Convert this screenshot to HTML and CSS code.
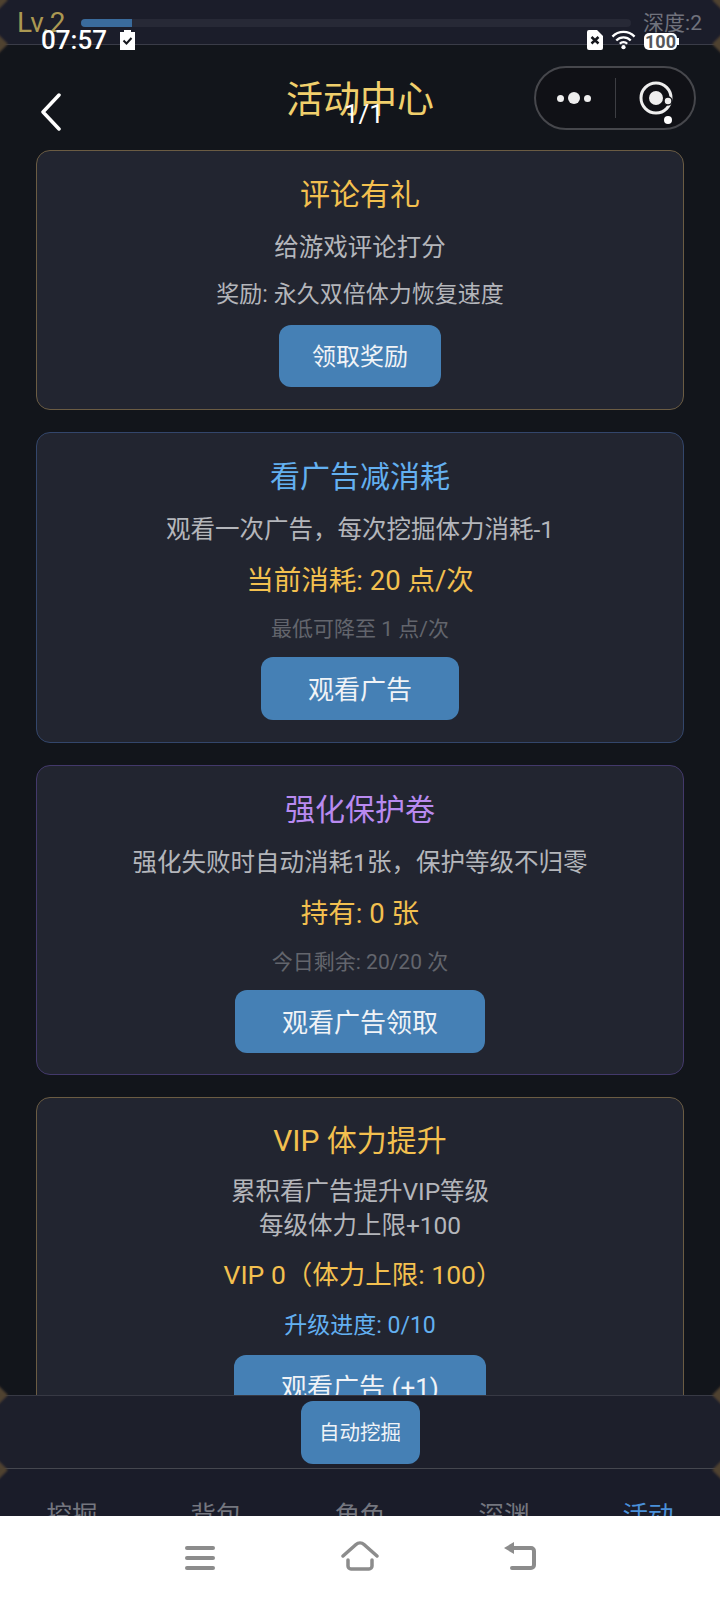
FILE: index.html
```html
<!DOCTYPE html>
<html lang="zh-CN">
<head>
    <meta charset="UTF-8">
    <meta name="viewport" content="width=device-width, initial-scale=1.0">
    <title>活动中心</title>
    <link rel="stylesheet" href="styles.css">
</head>
<body>
    <div class="app">
        <div class="top-bar">
            <span class="level">Lv.2</span>
            <div class="exp-bar"><div class="exp-fill"></div></div>
            <span class="depth">深度:2</span>
        </div>

        <div class="panel">
            <div class="panel-head">
                <h1>活动中心</h1>
            </div>
            <div class="cards">
                <div class="card card-gold">
                    <h2 class="gold">评论有礼</h2>
                    <p>给游戏评论打分</p>
                    <p class="reward">奖励: 永久双倍体力恢复速度</p>
                    <button class="btn btn-sm">领取奖励</button>
                </div>
                <div class="card card-blue">
                    <h2 class="blue">看广告减消耗</h2>
                    <p>观看一次广告，每次挖掘体力消耗-1</p>
                    <p class="stat">当前消耗: 20 点/次</p>
                    <p class="hint">最低可降至 1 点/次</p>
                    <button class="btn">观看广告</button>
                </div>
                <div class="card card-purple">
                    <h2 class="purple">强化保护卷</h2>
                    <p>强化失败时自动消耗1张，保护等级不归零</p>
                    <p class="stat">持有: 0 张</p>
                    <p class="hint">今日剩余: 20/20 次</p>
                    <button class="btn">观看广告领取</button>
                </div>
                <div class="card card-gold card-vip">
                    <h2 class="gold">VIP 体力提升</h2>
                    <p class="two-lines">累积看广告提升VIP等级<br>每级体力上限+100</p>
                    <p class="stat stat-vip">VIP 0（体力上限: 100）</p>
                    <p class="progress">升级进度: 0/10</p>
                    <button class="btn btn-wide">观看广告 (+1)</button>
                </div>
            </div>
        </div>

        <div class="action-bar">
            <button class="auto-btn">自动挖掘</button>
        </div>

        <div class="tabs">
            <span>挖掘</span>
            <span>背包</span>
            <span>角色</span>
            <span>深渊</span>
            <span class="active">活动</span>
        </div>

        <!-- things the host app paints over the page -->
        <i class="corner corner-l row-a"></i>
        <i class="corner corner-r row-a"></i>
        <i class="corner corner-l row-b"></i>
        <i class="corner corner-r row-b"></i>
        <i class="corner corner-l row-c"></i>
        <i class="corner corner-r row-c"></i>
        <i class="corner corner-l row-d"></i>
        <i class="corner corner-r row-d"></i>

        <div class="status-bar">
            <div class="status-left">
                <span class="clock">07:57</span>
                <svg width="15" height="20" viewBox="0 0 15 20"><path fill="#fff" d="M4 0h7v2h4v18H0V2h4z"/><path fill="none" stroke="#14161c" stroke-width="2" d="M3.500 10.500l3 3 5-5.500"/></svg>
            </div>
            <div class="status-right">
                <svg width="16" height="20" viewBox="0 0 16 20"><path fill="#fff" d="M2 0h8l6 6v12a2 2 0 0 1-2 2H2a2 2 0 0 1-2-2V2a2 2 0 0 1 2-2z"/><path fill="none" stroke="#14161c" stroke-width="2.500" d="M4.500 7l7 6.500m0-6.500l-7 6.500"/></svg>
                <svg width="25" height="20" viewBox="0 0 26 20"><g fill="none" stroke="#fff" stroke-width="2.400"><path d="M1.500 6.500a16 16 0 0 1 23 0"/><path d="M5.500 10.500a10.500 10.500 0 0 1 15 0"/><path d="M9.200 14a5 5 0 0 1 7.600 0"/></g><circle cx="13" cy="17.500" r="2.200" fill="#fff"/></svg>
                <span class="battery">100</span>
            </div>
        </div>

        <button class="back" aria-label="返回">
            <svg width="20" height="38" viewBox="0 0 20 38"><path fill="none" stroke="#fff" stroke-width="3.500" stroke-linecap="round" stroke-linejoin="round" d="M18 2L2 19l16 17"/></svg>
        </button>
        <span class="page-count">1/1</span>

        <div class="capsule">
            <div class="dots"><i></i><i class="big"></i><i></i></div>
            <span class="sep"></span>
            <svg width="36" height="46" viewBox="0 0 36 46"><circle cx="17" cy="18" r="15" fill="none" stroke="#eee" stroke-width="3"/><circle cx="17" cy="18" r="7" fill="#eee"/><circle cx="29" cy="21" r="4" fill="#eee" stroke="#101116" stroke-width="1.500"/><circle cx="29" cy="40" r="4" fill="#fff"/></svg>
        </div>

        <div class="sys-nav">
            <svg width="32" height="26" viewBox="0 0 32 26"><g fill="none" stroke="#8c8c8c" stroke-width="4" stroke-linecap="round"><path d="M3 3h26"/><path d="M3 13h26"/><path d="M3 23h26"/></g></svg>
            <svg class="up" width="38" height="30" viewBox="0 0 38 30"><g fill="none" stroke="#8c8c8c" stroke-width="3.500" stroke-linecap="round" stroke-linejoin="round"><path d="M2 15L15 3.500a6 6 0 0 1 8 0L36 15"/><path d="M7 19v6a3 3 0 0 0 3 3h18a3 3 0 0 0 3-3v-6"/></g></svg>
            <svg class="up" width="34" height="30" viewBox="0 0 34 30"><g fill="none" stroke="#8c8c8c" stroke-width="4" stroke-linecap="round" stroke-linejoin="round"><path d="M8 7h20a3 3 0 0 1 3 3v14a3 3 0 0 1-3 3H9"/></g><path fill="#8c8c8c" d="M11 1v12L1 7z"/></svg>
        </div>
    </div>
</body>
</html>
```

FILE: styles.css
```css
* {
    box-sizing: border-box;
}
html, body {
    margin: 0;
    height: 100%;
}
body {
    font-family: "Roboto", "Noto Sans CJK SC", sans-serif;
    background-color: #fff;
}
p, h1, h2 {
    margin: 0;
    font-weight: 400;
}
i {
    display: block;
}
.app {
    position: relative;
    width: 720px;
    height: 1600px;
    overflow: hidden;
    background: #12151b;
    display: flex;
    flex-direction: column;
}

/* top strip */
.top-bar {
    height: 45px;
    flex: none;
    padding: 0 18px 0 17px;
    display: flex;
    align-items: flex-start;
    gap: 14px;
    background: #1b1d2a;
    border-bottom: 1px solid #3a3c48;
}
.level {
    font-size: 28px;
    line-height: 46px;
    color: #ab9852;
    width: 50px;
    white-space: nowrap;
}
.exp-bar {
    flex: 1;
    height: 8px;
    margin-top: 19px;
    background: #272936;
    border-radius: 4px;
    overflow: hidden;
}
.exp-fill {
    width: 51px;
    height: 100%;
    background: #3a6b9c;
}
.depth {
    font-size: 21px;
    line-height: 46px;
    color: #70727c;
    margin-left: -2px;
    white-space: nowrap;
}

/* main panel */
.panel {
    flex: 1;
    min-height: 0;
    overflow: hidden;
    background: #12151b;
}
.panel-head {
    height: 105px;
    padding-top: 32px;
    text-align: center;
}
h1 {
    font-size: 37px;
    line-height: 48px;
    color: #f0cf6c;
}
.cards {
    padding: 0 36px;
    display: flex;
    flex-direction: column;
    gap: 22px;
}
.card {
    background: #222530;
    border: 1px solid #333;
    border-radius: 14px;
    padding: 23px 16px 21px;
    text-align: center;
    display: flex;
    flex-direction: column;
    align-items: center;
}
.card-gold {
    border-color: #6b5c43;
}
.card-blue {
    border-color: #33466b;
    padding-bottom: 22px;
}
.card-purple {
    border-color: #43396b;
}
.card-vip {
    padding-top: 22px;
}
h2 {
    font-size: 30px;
    line-height: 42px;
    margin-bottom: 15px;
}
.card-vip h2 {
    margin-bottom: 13px;
}
.gold {
    color: #f3c04f;
}
.blue {
    color: #63b0f0;
}
.purple {
    color: #b98af0;
}
.card p {
    font-size: 24.500px;
    line-height: 34px;
    color: #b4b6bb;
    margin-bottom: 15px;
}
.card p.reward {
    font-size: 23px;
    margin-top: -2px;
    margin-bottom: 13px;
}
.card p.two-lines {
    margin-bottom: 13px;
}
.card p.stat {
    font-size: 27.500px;
    line-height: 38px;
    color: #f3c04f;
    margin-bottom: 14px;
}
.card p.stat-vip {
    font-size: 26.500px;
    margin-left: 6px;
    margin-bottom: 16px;
}
.card p.hint {
    font-size: 21px;
    line-height: 30px;
    color: #63656d;
    margin-bottom: 13px;
}
.card p.progress {
    font-size: 23px;
    line-height: 30px;
    color: #63b0f0;
    margin-top: 1px;
    margin-bottom: 14px;
}
.btn {
    height: 63px;
    padding: 0 47px 3px;
    border: none;
    border-radius: 12px;
    background: #4580b5;
    color: #f0f3f7;
    font-family: inherit;
    font-size: 26px;
    flex: none;
}
.btn-sm {
    height: 62px;
    padding: 0 33px 4px;
    margin-bottom: 1px;
    font-size: 24px;
}
.btn-wide {
    width: 252px;
    padding: 0 0 3px;
}

/* bottom bars */
.action-bar {
    height: 74px;
    flex: none;
    display: flex;
    justify-content: center;
    padding-top: 5px;
    background: #1d1f2b;
    border-top: 1px solid #373944;
    border-bottom: 1px solid #45474f;
}
.auto-btn {
    width: 119px;
    height: 63px;
    padding: 0 0 3px;
    border: none;
    border-radius: 12px;
    background: #4580b5;
    color: #f0f3f7;
    font-family: inherit;
    font-size: 20.500px;
}
.tabs {
    height: 131px;
    flex: none;
    display: flex;
    background: #1a1c29;
}
.tabs span {
    flex: 1;
    text-align: center;
    padding-top: 28px;
    font-size: 25.500px;
    line-height: 36px;
    color: #74767f;
}
.tabs span.active {
    color: #4a90d9;
}
.sys-nav {
    position: absolute;
    left: 0;
    right: 0;
    bottom: 0;
    height: 84px;
    background: #fff;
    display: grid;
    grid-template-columns: 160px 160px 160px;
    justify-content: center;
    justify-items: center;
    align-items: center;
}
.sys-nav .up {
    margin-bottom: 4px;
}

/* decorative corners of the host frame */
.corner {
    position: absolute;
    width: 14px;
    height: 14px;
    background: #4f4230;
    filter: blur(1px);
    transform: rotate(45deg);
}
.corner-l { left: -9px; }
.corner-r { right: -9px; }
.row-a { top: -7px; }
.row-b { top: 37px; }
.row-c { top: 1388px; }
.row-d { top: 1463px; }

/* status bar, back arrow, mini program capsule */
.status-bar {
    position: absolute;
    left: 41px;
    right: 41px;
    top: 28px;
    height: 24px;
    display: flex;
    justify-content: space-between;
    align-items: center;
}
.status-left, .status-right {
    display: flex;
    align-items: center;
}
.status-left {
    gap: 13px;
}
.status-right {
    gap: 8px;
}
.clock {
    font-size: 26px;
    font-weight: 500;
    color: #fff;
    line-height: 24px;
}
.battery {
    position: relative;
    font-size: 18px;
    font-weight: 700;
    line-height: 17px;
    text-align: center;
    color: #55565a;
    background: #fff;
    border-radius: 5px;
    width: 33px;
    margin-right: 2px;
    margin-top: 2px;
}
.battery::after {
    content: "";
    position: absolute;
    right: -2px;
    top: 5px;
    width: 2px;
    height: 7px;
    background: #fff;
}
.back {
    position: absolute;
    left: 41px;
    top: 93px;
    padding: 0;
    border: none;
    background: none;
    line-height: 0;
}
.page-count {
    position: absolute;
    left: 344px;
    top: 98px;
    font-size: 26px;
    line-height: 32px;
    color: #fff;
}
.capsule {
    position: absolute;
    left: 534px;
    top: 66px;
    width: 162px;
    height: 64px;
    border: 2px solid #46474c;
    border-radius: 32px;
    background: #101116;
    display: flex;
    align-items: center;
}
.dots {
    margin-left: 21px;
    width: 34px;
    display: flex;
    align-items: center;
    justify-content: space-between;
}
.dots i {
    width: 7px;
    height: 7px;
    border-radius: 50%;
    background: #eee;
}
.dots i.big {
    width: 12px;
    height: 12px;
}
.sep {
    width: 1px;
    height: 40px;
    margin-left: 24px;
    background: #3d3e43;
}
.capsule svg {
    margin-left: 23px;
    margin-top: 10px;
    flex: none;
}
```
